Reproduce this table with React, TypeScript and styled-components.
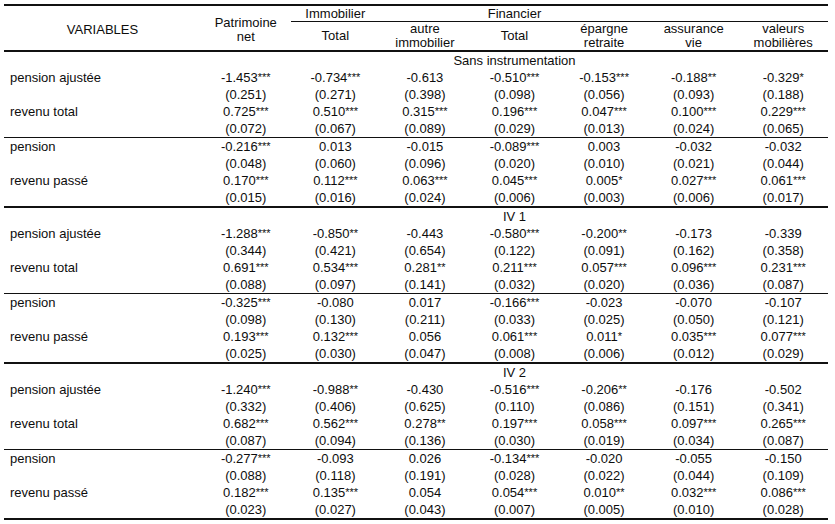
import React from 'react';
import styled, { createGlobalStyle } from 'styled-components';

type Line = { label: string; values: string[]; errors: string[] };
type Block = { title: string; groups: Line[][] };

const blocks: Block[] = [
    {
        title: 'Sans instrumentation',
        groups: [
            [
                {
                    label: 'pension ajustée',
                    values: ['-1.453***', '-0.734***', '-0.613', '-0.510***', '-0.153***', '-0.188**', '-0.329*'],
                    errors: ['(0.251)', '(0.271)', '(0.398)', '(0.098)', '(0.056)', '(0.093)', '(0.188)'],
                },
                {
                    label: 'revenu total',
                    values: ['0.725***', '0.510***', '0.315***', '0.196***', '0.047***', '0.100***', '0.229***'],
                    errors: ['(0.072)', '(0.067)', '(0.089)', '(0.029)', '(0.013)', '(0.024)', '(0.065)'],
                },
            ],
            [
                {
                    label: 'pension',
                    values: ['-0.216***', '0.013', '-0.015', '-0.089***', '0.003', '-0.032', '-0.032'],
                    errors: ['(0.048)', '(0.060)', '(0.096)', '(0.020)', '(0.010)', '(0.021)', '(0.044)'],
                },
                {
                    label: 'revenu passé',
                    values: ['0.170***', '0.112***', '0.063***', '0.045***', '0.005*', '0.027***', '0.061***'],
                    errors: ['(0.015)', '(0.016)', '(0.024)', '(0.006)', '(0.003)', '(0.006)', '(0.017)'],
                },
            ],
        ],
    },
    {
        title: 'IV 1',
        groups: [
            [
                {
                    label: 'pension ajustée',
                    values: ['-1.288***', '-0.850**', '-0.443', '-0.580***', '-0.200**', '-0.173', '-0.339'],
                    errors: ['(0.344)', '(0.421)', '(0.654)', '(0.122)', '(0.091)', '(0.162)', '(0.358)'],
                },
                {
                    label: 'revenu total',
                    values: ['0.691***', '0.534***', '0.281**', '0.211***', '0.057***', '0.096***', '0.231***'],
                    errors: ['(0.088)', '(0.097)', '(0.141)', '(0.032)', '(0.020)', '(0.036)', '(0.087)'],
                },
            ],
            [
                {
                    label: 'pension',
                    values: ['-0.325***', '-0.080', '0.017', '-0.166***', '-0.023', '-0.070', '-0.107'],
                    errors: ['(0.098)', '(0.130)', '(0.211)', '(0.033)', '(0.025)', '(0.050)', '(0.121)'],
                },
                {
                    label: 'revenu passé',
                    values: ['0.193***', '0.132***', '0.056', '0.061***', '0.011*', '0.035***', '0.077***'],
                    errors: ['(0.025)', '(0.030)', '(0.047)', '(0.008)', '(0.006)', '(0.012)', '(0.029)'],
                },
            ],
        ],
    },
    {
        title: 'IV 2',
        groups: [
            [
                {
                    label: 'pension ajustée',
                    values: ['-1.240***', '-0.988**', '-0.430', '-0.516***', '-0.206**', '-0.176', '-0.502'],
                    errors: ['(0.332)', '(0.406)', '(0.625)', '(0.110)', '(0.086)', '(0.151)', '(0.341)'],
                },
                {
                    label: 'revenu total',
                    values: ['0.682***', '0.562***', '0.278**', '0.197***', '0.058***', '0.097***', '0.265***'],
                    errors: ['(0.087)', '(0.094)', '(0.136)', '(0.030)', '(0.019)', '(0.034)', '(0.087)'],
                },
            ],
            [
                {
                    label: 'pension',
                    values: ['-0.277***', '-0.093', '0.026', '-0.134***', '-0.020', '-0.055', '-0.150'],
                    errors: ['(0.088)', '(0.118)', '(0.191)', '(0.028)', '(0.022)', '(0.044)', '(0.109)'],
                },
                {
                    label: 'revenu passé',
                    values: ['0.182***', '0.135***', '0.054', '0.054***', '0.010**', '0.032***', '0.086***'],
                    errors: ['(0.023)', '(0.027)', '(0.043)', '(0.007)', '(0.005)', '(0.010)', '(0.028)'],
                },
            ],
        ],
    },
];

const subHeaders: string[][] = [
    ['Total'],
    ['autre', 'immobilier'],
    ['Total'],
    ['épargne', 'retraite'],
    ['assurance', 'vie'],
    ['valeurs', 'mobilières'],
];

const Value = ({ text }: { text: string }) => {
    const match = text.match(/^([^*]*)(\**)$/);
    const num = match ? match[1] : text;
    const stars = match ? match[2] : '';
    return (
        <Cell>
            {num}
            {stars && <Stars>{stars}</Stars>}
        </Cell>
    );
};

const DataRow = ({ label, values }: { label: string; values: string[] }) => (
    <Row>
        <Label>{label}</Label>
        {values.map((v, i) => (
            <Value key={i} text={v} />
        ))}
    </Row>
);

const App = () => (
    <>
        <GlobalStyle />
        <Table>
            <Header>
                <Variables>VARIABLES</Variables>
                <Patrimoine>
                    Patrimoine
                    <br />
                    net
                </Patrimoine>
                <GroupTitle $col={3}>Immobilier</GroupTitle>
                <GroupTitle $col={5}>Financier</GroupTitle>
                <GroupRule />
                {subHeaders.map((lines, i) => (
                    <SubHeader key={i} $col={i + 3}>
                        {lines.map((l, j) => (
                            <React.Fragment key={j}>
                                {j > 0 && <br />}
                                {l}
                            </React.Fragment>
                        ))}
                    </SubHeader>
                ))}
            </Header>
            {blocks.map((block) => (
                <BlockWrap key={block.title}>
                    <SectionRow>
                        <SectionTitle>{block.title}</SectionTitle>
                    </SectionRow>
                    {block.groups.map((group, gi) => (
                        <Group key={gi} $last={gi === block.groups.length - 1}>
                            {group.map((line) => (
                                <React.Fragment key={line.label}>
                                    <DataRow label={line.label} values={line.values} />
                                    <DataRow label="" values={line.errors} />
                                </React.Fragment>
                            ))}
                        </Group>
                    ))}
                </BlockWrap>
            ))}
        </Table>
    </>
);

const GlobalStyle = createGlobalStyle`
    html, body {
        margin: 0;
        padding: 0;
        background: #ffffff;
    }
    body {
        font-family: "Liberation Sans", Arial, sans-serif;
        color: #0d0d0d;
    }
`;

const columns = '197px repeat(7, 1fr)';

const Table = styled.div`
    width: 824px;
    margin: 4px 0 0 4px;
    border-top: 2px solid #111;
    font-size: 13px;
`;

const Header = styled.div`
    display: grid;
    grid-template-columns: ${columns};
    grid-template-rows: 16px 28px;
    border-bottom: 2px solid #111;
    line-height: 14px;
`;

const Variables = styled.div`
    grid-column: 1;
    grid-row: 1 / 3;
    display: flex;
    align-items: center;
    justify-content: center;
    padding-top: 4px;
`;

const Patrimoine = styled.div`
    grid-column: 2;
    grid-row: 1 / 3;
    display: flex;
    align-items: center;
    justify-content: center;
    text-align: center;
    padding-top: 4px;
`;

const GroupTitle = styled.div<{ $col: number }>`
    grid-column: ${({ $col }) => $col};
    grid-row: 1;
    text-align: center;
    white-space: nowrap;
    padding-top: 1px;
`;

const GroupRule = styled.div`
    grid-column: 3 / -1;
    grid-row: 1;
    align-self: end;
    height: 1px;
    background: #111;
`;

const SubHeader = styled.div<{ $col: number }>`
    grid-column: ${({ $col }) => $col};
    grid-row: 2;
    display: flex;
    align-items: center;
    justify-content: center;
    text-align: center;
    white-space: nowrap;
`;

const BlockWrap = styled.div`
    display: flex;
    flex-direction: column;
`;

const SectionRow = styled.div`
    display: grid;
    grid-template-columns: ${columns};
    height: 17px;
    align-items: center;
`;

const SectionTitle = styled.div`
    grid-column: 5;
    justify-self: center;
    white-space: nowrap;
`;

const Group = styled.div<{ $last: boolean }>`
    border-bottom: ${({ $last }) => ($last ? '2px' : '1px')} solid #111;
`;

const Row = styled.div`
    display: grid;
    grid-template-columns: ${columns};
    height: 17px;
    align-items: center;
`;

const Label = styled.div`
    padding-left: 6px;
    white-space: nowrap;
`;

const Cell = styled.div`
    text-align: center;
    white-space: nowrap;
`;

const Stars = styled.span`
    font-size: 11px;
    position: relative;
    top: -1px;
`;

export default App;
